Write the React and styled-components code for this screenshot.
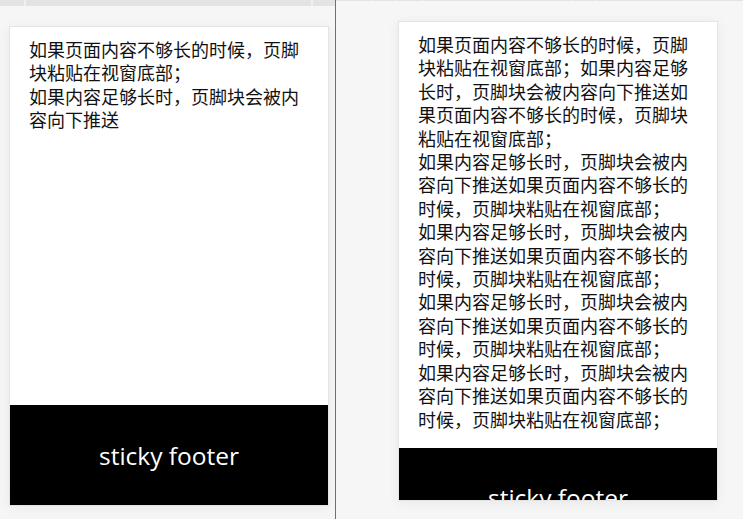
import React from 'react';
import styled, { createGlobalStyle } from 'styled-components';

const GlobalStyle = createGlobalStyle`
	html, body {
		margin: 0;
		padding: 0;
		background: #f6f6f6;
		overflow: hidden;
	}
`;

const Page = styled.div`
	display: flex;
	width: 743px;
	height: 519px;
	overflow: hidden;
`;

const Pane = styled.div`
	position: relative;
	width: ${props => props.width}px;
	flex-shrink: 0;
	padding: ${props => props.top}px 0 0 ${props => props.left}px;
	box-sizing: border-box;
	background: #f6f6f6;
`;

const Tabs = styled.div`
	display: flex;
	gap: 2px;
	height: ${props => props.height}px;
	margin: -${props => props.top}px 0 ${props => props.top - props.height}px -${props => props.left}px;
	background: #f0f0f0;
`;

const Tab = styled.div`
	flex: ${props => props.grow ? 1 : 'none'};
	width: ${props => props.width || 0}px;
	background: #e3e3e3;
`;

const Divider = styled.div`
	width: 1px;
	flex-shrink: 0;
	background: #707070;
`;

const Card = styled.div`
	display: flex;
	flex-direction: column;
	width: 320px;
	height: 480px;
	overflow: hidden;
	background: #fff;
	border: 1px solid #e4e4e4;
	box-sizing: border-box;
	box-shadow: 0 2px 12px rgba(0, 0, 0, 0.06);
`;

const Content = styled.div`
	flex: 1 0 auto;
	padding: 11px 20px 17px 19px;
	font-family: "Noto Sans CJK SC", "Microsoft YaHei", sans-serif;
	font-size: 18px;
	line-height: 23.4px;
	color: #111;

	p {
		margin: 0;
	}
`;

const Footer = styled.div`
	flex: 0 0 100px;
	display: flex;
	align-items: center;
	justify-content: center;
	background: #000;
	color: #fff;
	font-family: "Open Sans", "Noto Sans", sans-serif;
	font-size: 24.5px;
`;

const FIRST = '如果页面内容不够长的时候，页脚块粘贴在视窗底部；';
const SECOND = '如果内容足够长时，页脚块会被内容向下推送';

export default function App() {
	return (
		<Page>
			<GlobalStyle />
			<Pane width={335} top={26} left={9}>
				<Tabs height={6} top={26} left={9}>
					<Tab width={24} />
					<Tab grow />
					<Tab width={22} />
				</Tabs>
				<Card>
					<Content>
						<p>{FIRST}</p>
						<p>{SECOND}</p>
					</Content>
					<Footer>sticky footer</Footer>
				</Card>
			</Pane>
			<Divider />
			<Pane width={407} top={21} left={62}>
				<Tabs height={1} top={21} left={62}>
					<Tab width={36} />
					<Tab width={22} />
					<Tab width={23} />
					<Tab grow />
					<Tab width={22} />
					<Tab grow />
				</Tabs>
				<Card>
					<Content>
						<p>{FIRST + SECOND + FIRST}</p>
						{[0, 1, 2, 3].map(i => (
							<p key={i}>{SECOND + FIRST}</p>
						))}
					</Content>
					<Footer>sticky footer</Footer>
				</Card>
			</Pane>
		</Page>
	);
}
